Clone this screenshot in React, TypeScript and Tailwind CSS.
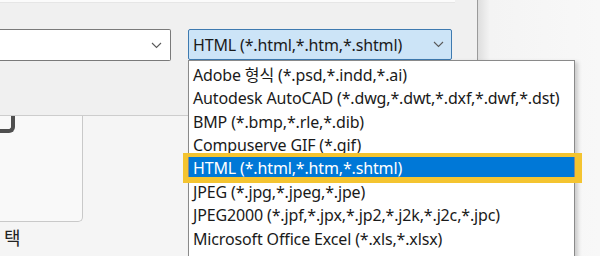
const items = [
  'Adobe 형식 (*.psd,*.indd,*.ai)',
  'Autodesk AutoCAD (*.dwg,*.dwt,*.dxf,*.dwf,*.dst)',
  'BMP (*.bmp,*.rle,*.dib)',
  'Compuserve GIF (*.gif)',
  'HTML (*.html,*.htm,*.shtml)',
  'JPEG (*.jpg,*.jpeg,*.jpe)',
  'JPEG2000 (*.jpf,*.jpx,*.jp2,*.j2k,*.j2c,*.jpc)',
  'Microsoft Office Excel (*.xls,*.xlsx)',
  'Microsoft Office PowerPoint (*.ppt,*.pptx)',
];

const selected = 4;
const font = "font-['Noto_Sans','Noto_Sans_CJK_KR',sans-serif]";

function Chevron() {
  return (
    <svg width="11" height="7" viewBox="0 0 11 7" fill="none">
      <path d="M1 1l4.5 4.5L10 1" stroke="#5a5a5a" strokeWidth="1.1" />
    </svg>
  );
}

function App() {
  return (
    <div className={`relative w-[600px] h-[256px] overflow-hidden flex bg-[#f8f8f8] text-[#1a1a1a] ${font}`}>
      {/* dialog */}
      <div className="w-[478px] h-full flex flex-col bg-[#f0f0f0] border-r border-[#9a9a9a]">
        <div className="w-[455px] h-[3px] bg-[#fbfbfb] border-b border-[#e6e6e6]" />
        <div className="flex items-start gap-[17px] mt-[26px]">
          <div className="w-[171px] h-[32px] bg-white border border-l-0 border-[#7a7a7a] rounded-r-[2px] flex items-center justify-end pr-[8px]">
            <Chevron />
          </div>
          <div className="w-[264px] h-[31px] bg-[#cce4f7] border border-[#3e7ab0] rounded-[2px] flex items-center justify-between pl-[4px] pr-[7px]">
            <span className="text-[16px] tracking-[-0.15px] leading-none pt-[1px]">HTML (*.html,*.htm,*.shtml)</span>
            <Chevron />
          </div>
        </div>
        <div className="h-[54px]" />
        <div className="flex-1 w-[188px] bg-[#f5f5f5] border-t border-[#cdcdcd] flex flex-col">
          <div className="w-[83px] h-[106px] bg-[#f9f9f9] border-r border-b border-[#c9c9c9] rounded-br-[5px]">
            <div className="w-[15px] h-[17px] border-r-[4px] border-b-[4px] border-[#4f4f4f] rounded-br-[6px]" />
          </div>
          <div className="pl-[4px] pt-[7px] text-[18px] leading-none text-[#222]">택</div>
        </div>
      </div>
      <div className="flex-1 h-full bg-[linear-gradient(to_right,#dedede,#f4f4f4_12px,#f8f8f8)]" />

      {/* dropdown list */}
      <div className="absolute left-[188px] top-[60px] w-[387px] h-[220px] bg-white border border-[#8a8a8a] shadow-[3px_2px_4px_rgba(0,0,0,0.18)] pt-[2px]">
        {items.map((t, i) => (
          <div
            key={t}
            className={`h-[23.43px] flex items-center pl-[4px] text-[16px] tracking-[-0.15px] leading-none whitespace-nowrap ${
              i === selected ? 'bg-[#0078d7] text-white' : ''
            }`}
          >
            {t}
          </div>
        ))}
      </div>

      {/* highlight frame */}
      <div className="absolute left-[183px] top-[153px] w-[399px] h-[30px] border-[#f4c430] border-l-[5px] border-t-[4px] border-r-[7px] border-b-[6px]" />
    </div>
  );
}

export default App;
